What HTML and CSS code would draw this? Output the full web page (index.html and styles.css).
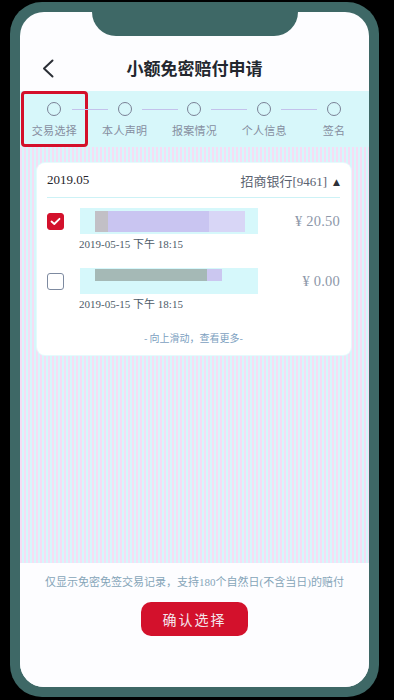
FILE: index.html
```html
<!DOCTYPE html>
<html lang="zh-CN">
<head>
<meta charset="utf-8">
<title>小额免密赔付申请</title>
<link rel="stylesheet" href="styles.css">
</head>
<body>
<div class="phone">
  <div class="notch"></div>
  <div class="screen">
    <header class="header">
      <div class="back">
        <svg width="12" height="19" viewBox="0 0 12 19"><path d="M10.5 1.5 L2 9.5 L10.5 17.5" fill="none" stroke="#2b2f36" stroke-width="2" stroke-linecap="round" stroke-linejoin="round"/></svg>
      </div>
      <h1 class="title">小额免密赔付申请</h1>
      <div></div>
    </header>
    <nav class="steps">
      <div class="step active"><span class="dot"></span><span class="label">交易选择</span></div>
      <div class="step"><span class="dot"></span><span class="label">本人声明</span></div>
      <div class="step"><span class="dot"></span><span class="label">报案情况</span></div>
      <div class="step"><span class="dot"></span><span class="label">个人信息</span></div>
      <div class="step"><span class="dot"></span><span class="label">签名</span></div>
    </nav>
    <main class="main">
      <section class="card">
        <div class="card-head">
          <span class="month">2019.05</span>
          <span class="bank">招商银行[9461]<span class="tri">▲</span></span>
        </div>
        <div class="row">
          <span class="check on"><svg width="11" height="9" viewBox="0 0 11 9"><path d="M1.5 4.5 L4.3 7 L9.5 1.8" fill="none" stroke="#fff" stroke-width="1.8" stroke-linecap="round" stroke-linejoin="round"/></svg></span>
          <div class="blur b1" aria-hidden="true"><span class="g"></span><span class="l"></span><span class="l2"></span></div>
          <span class="amount">¥ 20.50</span>
          <span class="date">2019-05-15 <span class="cjk">下午</span> 18:15</span>
        </div>
        <div class="row">
          <span class="check"></span>
          <div class="blur b2" aria-hidden="true"><span class="t"></span><span class="l"></span></div>
          <span class="amount">¥ 0.00</span>
          <span class="date">2019-05-15 <span class="cjk">下午</span> 18:15</span>
        </div>
        <p class="hint">- 向上滑动，查看更多-</p>
      </section>
    </main>
    <footer class="bottom">
      <p class="note">仅显示免密免签交易记录，支持180个自然日(不含当日)的赔付</p>
      <button class="confirm">确认选择</button>
    </footer>
  </div>
</div>
</body>
</html>
```

FILE: styles.css
```css
* { box-sizing: border-box; }
html, body { margin: 0; padding: 0; }
body {
  width: 394px;
  height: 700px;
  background: #000;
  overflow: hidden;
  font-family: "Noto Sans CJK SC", "Noto Sans", sans-serif;
}
.phone {
  position: relative;
  margin: 2px 0 0 10px;
  width: 369px;
  height: 695px;
  padding: 10px;
  background: #3e6866;
  border-radius: 32px;
}
.notch {
  position: absolute;
  top: 8px;
  left: 82px;
  width: 206px;
  height: 26px;
  background: #3e6866;
  border-radius: 0 0 24px 24px;
  z-index: 2;
}
.screen {
  height: 675px;
  background: #fdfdff;
  border-radius: 24px;
  overflow: hidden;
  display: flex;
  flex-direction: column;
}
.header {
  height: 79px;
  padding-top: 44px;
  display: grid;
  grid-template-columns: 44px 1fr 44px;
  grid-template-rows: 24px;
  align-items: center;
}
.back {
  padding-left: 22px;
  height: 24px;
  display: flex;
  align-items: center;
}
.title {
  margin: 0;
  text-align: center;
  font-size: 17px;
  line-height: 24px;
  font-weight: 700;
  color: #23272e;
}
.steps {
  height: 56px;
  background: #d7f7fa;
  display: grid;
  grid-template-columns: repeat(5, 1fr);
}
.step {
  position: relative;
  display: flex;
  flex-direction: column;
  align-items: center;
  padding-top: 11px;
}
.step.active {
  border: 3px solid #d40f2a;
  border-radius: 4px;
  padding-top: 8px;
  margin: 0 2px 0 1px;
}
.step + .step::before {
  content: "";
  position: absolute;
  top: 18px;
  right: calc(50% + 17px);
  width: 36px;
  height: 1px;
  background: #c3c2ec;
}
.dot {
  width: 14px;
  height: 14px;
  border: 1.5px solid #7a8196;
  border-radius: 50%;
}
.label {
  margin-top: 7px;
  font-size: 11px;
  line-height: 14px;
  color: #868ea0;
  letter-spacing: 0.3px;
}
.main {
  height: 416px;
  padding: 16px 18px 0 17px;
  background: repeating-linear-gradient(90deg, #f6ddf4 0 2px, #d6f7fb 2px 4px);
}
.card {
  background: #fff;
  border-radius: 8px;
  padding: 0 11px 10px 10px;
  box-shadow: 0 0 0 1px #e6fafc;
  font-family: "Liberation Serif", "Noto Sans CJK SC", serif;
}
.card-head {
  height: 35px;
  display: flex;
  justify-content: space-between;
  align-items: center;
  border-bottom: 1px solid #cdf2f6;
  font-size: 13px;
}
.month { color: #1f242b; }
.bank {
  color: #5a6270;
  font-family: "Liberation Serif", "Noto Sans CJK SC", serif;
}
.tri {
  margin-left: 6px;
  font-size: 9px;
  color: #2d3138;
  font-family: "DejaVu Sans", sans-serif;
  vertical-align: 1px;
}
.row {
  height: 60px;
  display: grid;
  grid-template-columns: 17px 1fr auto;
  grid-template-rows: 26px 16px;
  column-gap: 15px;
  align-items: center;
}
.card-head + .row { margin-top: 10px; }
.check {
  width: 17px;
  height: 17px;
  border: 1.5px solid #7d8aa0;
  border-radius: 3px;
  display: flex;
  align-items: center;
  justify-content: center;
}
.check.on {
  background: #d3112c;
  border-color: #d3112c;
}
.blur {
  height: 26px;
  margin-left: 1px;
  width: 178px;
  display: flex;
  align-items: center;
  padding-left: 15px;
  background: #d6f8fb;
}
.blur span { display: block; }
.b1 .g { width: 13px; height: 21px; background: #c2c0c6; }
.b1 .l { width: 101px; height: 21px; background: #c9c5f1; }
.b1 .l2 { width: 36px; height: 21px; background: #d8d6f6; }
.b2 .t { width: 112px; height: 12px; background: #a5b9b6; align-self: flex-start; margin-top: 1px; }
.b2 .l { width: 15px; height: 12px; background: #cbc7f0; align-self: flex-start; margin-top: 1px; }
.amount {
  font-size: 14.5px;
  color: #8d97a9;
  letter-spacing: 0.2px;
}
.date {
  grid-column: 2 / 4;
  grid-row: 2;
  margin-top: 2px;
  font-size: 11px;
  line-height: 16px;
  color: #4d5b68;
}
.cjk { font-family: "Noto Sans CJK SC", sans-serif; }
.hint {
  margin: 3px 0 0;
  text-align: center;
  font-size: 10px;
  line-height: 14px;
  color: #7c9fbf;
  font-family: "Noto Sans CJK SC", sans-serif;
}
.bottom {
  flex: 1;
  background: #fdfdff;
  display: flex;
  flex-direction: column;
  align-items: center;
  padding-top: 11px;
}
.note {
  margin: 0;
  font-size: 11px;
  line-height: 16px;
  color: #86a5b9;
  font-family: "Liberation Serif", "Noto Sans CJK SC", serif;
  white-space: nowrap;
}
.confirm {
  margin-top: 12px;
  width: 107px;
  height: 34px;
  border: 0;
  border-radius: 10px;
  background: #d3112c;
  color: #f3e6ec;
  font-size: 14px;
  letter-spacing: 2px;
  font-family: "Noto Sans CJK SC", sans-serif;
  padding: 0;
}
```
